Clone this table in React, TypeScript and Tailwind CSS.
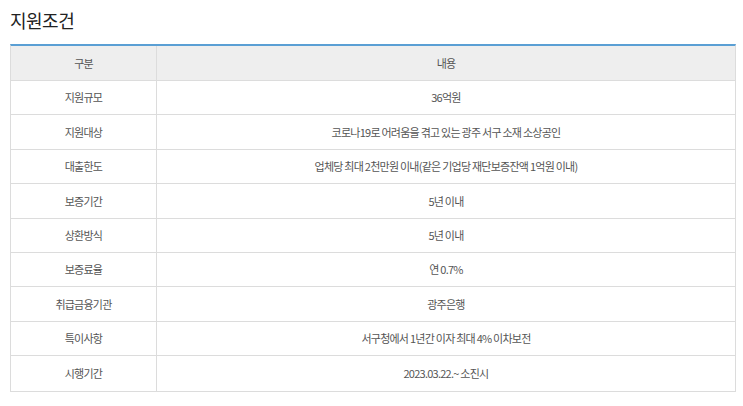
import React from "react";

const rows: [string, string][] = [
  ["지원규모", "36억원"],
  ["지원대상", "코로나19로 어려움을 겪고 있는 광주 서구 소재 소상공인"],
  ["대출한도", "업체당 최대 2천만원 이내(같은 기업당 재단보증잔액 1억원 이내)"],
  ["보증기간", "5년 이내"],
  ["상환방식", "5년 이내"],
  ["보증료율", "연 0.7%"],
  ["취급금융기관", "광주은행"],
  ["특이사항", "서구청에서 1년간 이자 최대 4% 이차보전"],
  ["시행기간", "2023.03.22.~ 소진시"],
];

export default function App() {
  return (
    <div
      className="w-[743px] h-[406px] bg-white"
      style={{ fontFamily: '"Noto Sans CJK KR", "Noto Sans", sans-serif' }}
    >
      <div className="pt-[7px] pl-[10px] text-[18px] leading-[26px] text-[#222] tracking-[-0.5px]">지원조건</div>
      <div className="mt-[11px] mx-[10px] w-[726px] border-t-2 border-t-[#5a9fd4] border-x border-b border-[#dcdcdc]">
        <div className="grid grid-cols-[146px_1fr] h-[35px] bg-[#eeeeee] border-b border-[#dcdcdc] text-[11px] tracking-[-0.75px] text-[#555]">
          <div className="flex items-center justify-center border-r border-[#dcdcdc]">구분</div>
          <div className="flex items-center justify-center">내용</div>
        </div>
        {rows.map(([k, v], i) => (
          <div
            key={k}
            className={`grid grid-cols-[146px_1fr] h-[34.4px] text-[11px] tracking-[-0.75px] text-[#555] ${
              i < rows.length - 1 ? "border-b border-[#dcdcdc]" : ""
            }`}
          >
            <div className="flex items-center justify-center border-r border-[#dcdcdc]">{k}</div>
            <div className="flex items-center justify-center">{v}</div>
          </div>
        ))}
      </div>
    </div>
  );
}
